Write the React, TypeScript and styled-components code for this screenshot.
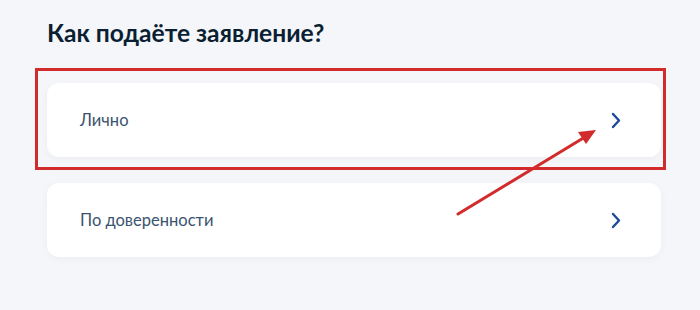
import React from 'react'
import styled, { createGlobalStyle, css } from 'styled-components'

const GlobalStyle = createGlobalStyle`
  html, body {
    margin: 0;
    padding: 0;
    background: #f4f6fa;
  }
  body {
    font-family: Lato, "Noto Sans", sans-serif;
    -webkit-font-smoothing: antialiased;
  }
`

const Page = styled.main`
  position: relative;
  width: 700px;
  height: 310px;
  box-sizing: border-box;
  padding: 16px 39px 0 47px;
  overflow: hidden;
`

const Title = styled.h2`
  margin: 0 0 34px;
  font-size: 24.6px;
  line-height: 33px;
  font-weight: 700;
  color: #0b1f33;
`

const OptionList = styled.div`
  display: flex;
  flex-direction: column;
  gap: 26px;
`

const Option = styled.button<{ $highlighted?: boolean }>`
  position: relative;
  display: flex;
  align-items: center;
  justify-content: space-between;
  height: 74px;
  padding: 0 40px 0 33px;
  border: none;
  border-radius: 12px;
  background: #fff;
  box-shadow: 0 2px 8px rgba(11, 31, 51, 0.04);
  font: inherit;
  cursor: pointer;
  text-align: left;

  ${p => p.$highlighted && css`
    &::after {
      content: '';
      position: absolute;
      top: -15px;
      left: -12px;
      right: -5px;
      bottom: -13px;
      border: 3px solid #d22b2b;
      pointer-events: none;
    }
  `}
`

const OptionLabel = styled.span`
  font-size: 16.5px;
  color: #3a536f;
`

const Chevron = () => (
  <svg width="10" height="17" viewBox="0 0 10 17" fill="none">
    <path d="M2 2l6 6.5L2 15" stroke="#1b4a9c" strokeWidth="2.4" strokeLinecap="round" strokeLinejoin="round" />
  </svg>
)

const Pointer = styled.svg`
  position: absolute;
  left: 0;
  top: 0;
  pointer-events: none;
`

export default function App() {
  return (
    <Page>
      <GlobalStyle />
      <Title>Как подаёте заявление?</Title>
      <OptionList>
        <Option $highlighted>
          <OptionLabel>Лично</OptionLabel>
          <Chevron />
        </Option>
        <Option>
          <OptionLabel>По доверенности</OptionLabel>
          <Chevron />
        </Option>
      </OptionList>
      <Pointer width="700" height="310" viewBox="0 0 700 310">
        <line x1="458" y1="214" x2="585" y2="137" stroke="#d22b2b" strokeWidth="3" strokeLinecap="round" />
        <polygon points="596,130 578,132 586,144" fill="#d22b2b" />
      </Pointer>
    </Page>
  )
}
